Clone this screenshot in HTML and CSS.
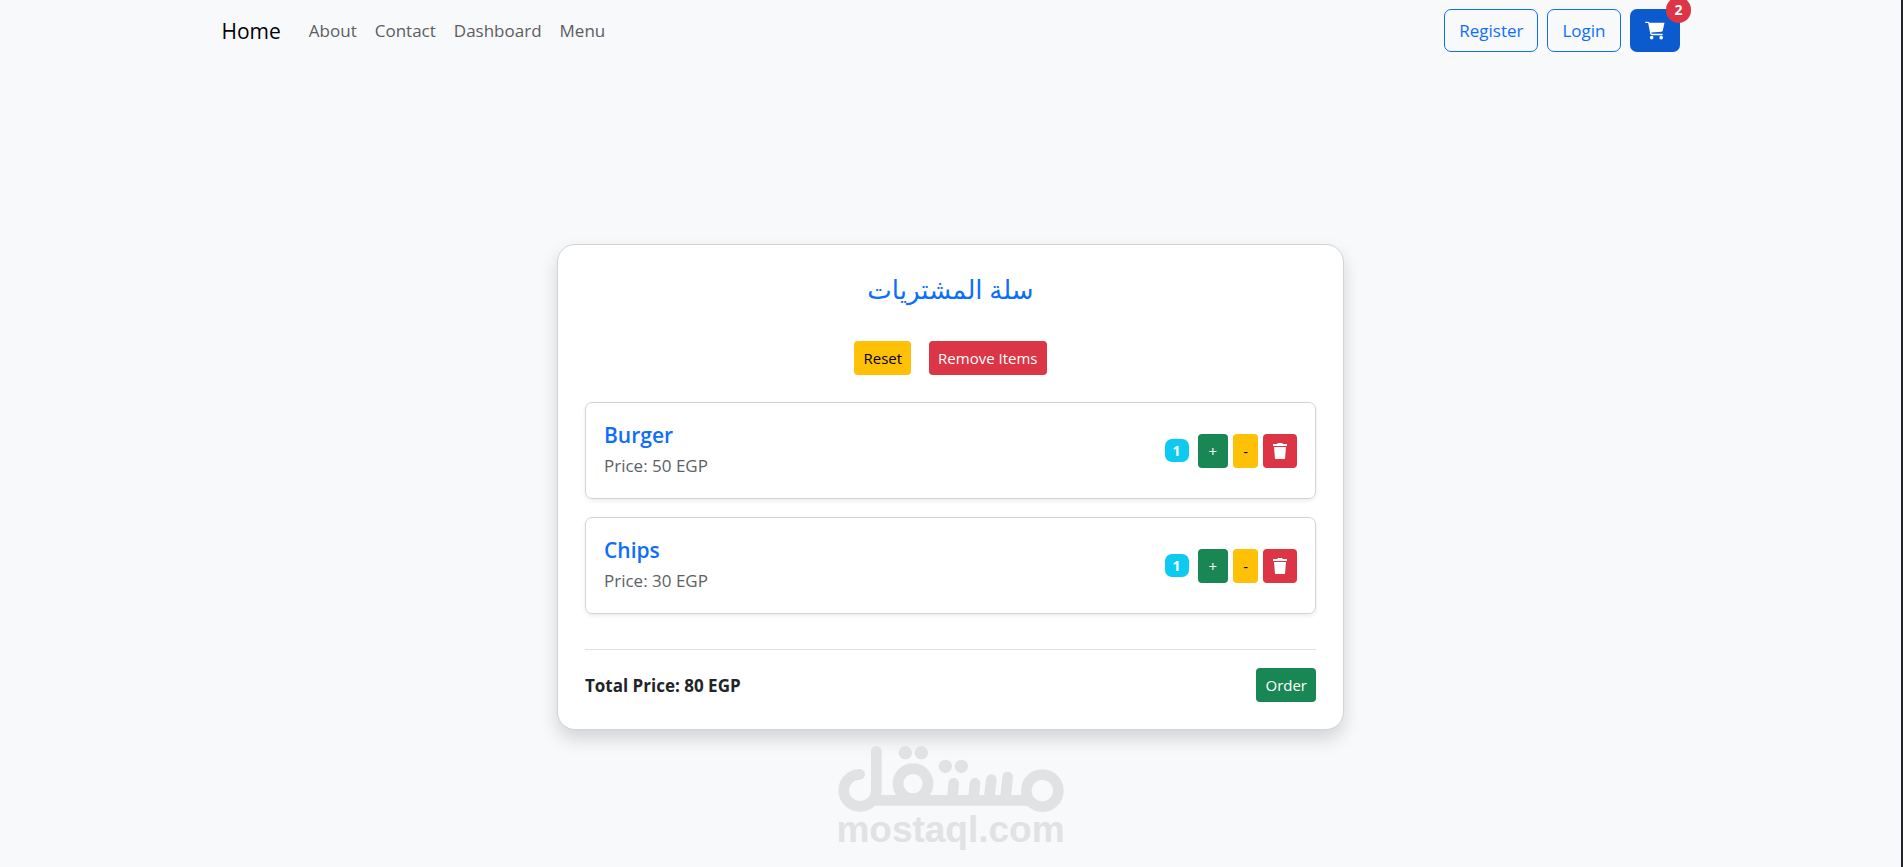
FILE: index.html
```html
<!DOCTYPE html>
<html lang="en">
<head>
    <meta charset="UTF-8">
    <meta name="viewport" content="width=device-width, initial-scale=1.0">
    <title>Cart</title>
    <link rel="stylesheet" href="styles.css">
</head>
<body>
    <!-- shared icons -->
    <svg class="icon-defs" aria-hidden="true">
        <symbol id="icon-trash" viewBox="0 0 14 16">
            <path d="M4 1L5 0h4l1 1h4v2H0V1z"/>
            <path d="M1 4h12l-1 12H2z"/>
        </symbol>
    </svg>

    <nav class="navbar">
        <div class="nav-inner">
            <a class="brand" href="#">Home</a>
            <div class="nav-links">
                <a href="#">About</a>
                <a href="#">Contact</a>
                <a href="#">Dashboard</a>
                <a href="#">Menu</a>
            </div>
            <div class="nav-actions">
                <a class="btn btn-outline" href="#">Register</a>
                <a class="btn btn-outline" href="#">Login</a>
                <button class="btn btn-cart" type="button" aria-label="Cart">
                    <svg class="cart-icon" viewBox="0 0 21 19" aria-hidden="true">
                        <path d="M4 1.300h16.500l-1.800 8.200q-.3 1.300-1.600 1.400L6.300 11.500z"/>
                        <path class="cart-line" d="M.7.900h2.500q.7 0 .9.800L6.200 12.700q.2 1 1.200 1H18"/>
                        <circle cx="7" cy="17" r="1.900"/>
                        <circle cx="17" cy="17" r="1.900"/>
                    </svg>
                    <span class="cart-count">2</span>
                </button>
            </div>
        </div>
    </nav>

    <main class="page">
        <section class="cart">
            <h3 class="cart-title" lang="ar" dir="rtl">سلة المشتريات</h3>

            <div class="cart-tools">
                <button class="btn btn-sm btn-warning" type="button">Reset</button>
                <button class="btn btn-sm btn-danger" type="button">Remove Items</button>
            </div>

            <div class="cart-items">
                <div class="item">
                    <div class="item-info">
                        <h5>Burger</h5>
                        <p>Price: 50 EGP</p>
                    </div>
                    <div class="item-actions">
                        <span class="qty">1</span>
                        <button class="btn btn-sm btn-success" type="button">+</button>
                        <button class="btn btn-sm btn-warning" type="button">-</button>
                        <button class="btn btn-sm btn-danger" type="button" aria-label="Delete">
                            <svg class="trash-icon" aria-hidden="true"><use href="#icon-trash"/></svg>
                        </button>
                    </div>
                </div>
                <div class="item">
                    <div class="item-info">
                        <h5>Chips</h5>
                        <p>Price: 30 EGP</p>
                    </div>
                    <div class="item-actions">
                        <span class="qty">1</span>
                        <button class="btn btn-sm btn-success" type="button">+</button>
                        <button class="btn btn-sm btn-warning" type="button">-</button>
                        <button class="btn btn-sm btn-danger" type="button" aria-label="Delete">
                            <svg class="trash-icon" aria-hidden="true"><use href="#icon-trash"/></svg>
                        </button>
                    </div>
                </div>
            </div>

            <div class="cart-footer">
                <strong>Total Price: 80 EGP</strong>
                <button class="btn btn-sm btn-success" type="button">Order</button>
            </div>
        </section>

        <div class="watermark">
            <svg class="watermark-logo" viewBox="54 34 678 198" aria-hidden="true">
                <g class="strokes">
                    <path d="M169 50V168A49 48 0 1 1 119 119"/>
                    <path d="M165 197H626"/>
                    <circle cx="279" cy="147" r="45"/>
                    <circle cx="667" cy="168" r="48"/>
                    <path d="M401 146L397 195M465 146L460 195M514 135L507 195M563 127L556 195"/>
                </g>
                <circle cx="256" cy="54" r="20"/>
                <circle cx="304" cy="54" r="20"/>
                <circle cx="376" cy="95" r="20"/>
                <circle cx="424" cy="95" r="20"/>
            </svg>
            <span>mostaql.com</span>
        </div>
    </main>
</body>
</html>
```
FILE: styles.css
```css
* {
    box-sizing: border-box;
}

body {
    margin: 0;
    min-height: 100vh;
    background: #f8f9fb;
    border-right: 2px solid #212529;
    color: #212529;
    font-family: "Open Sans", "DejaVu Sans", sans-serif;
    font-size: 17px;
    line-height: 25px;
}

a {
    text-decoration: none;
}

.icon-defs {
    position: absolute;
    width: 0;
    height: 0;
}

/* navbar */
.navbar {
    padding: 9px 16px;
}

.nav-inner {
    display: flex;
    align-items: center;
    max-width: 1458px;
    margin: 0 auto;
}

.brand {
    margin-right: 28px;
    color: #000;
    font-size: 21px;
    line-height: 26px;
}

.nav-links {
    display: flex;
    gap: 18px;
}

.nav-links a {
    color: #5c5d5e;
}

.nav-actions {
    display: flex;
    gap: 9px;
    margin-left: auto;
}

/* buttons */
.btn {
    display: inline-flex;
    align-items: center;
    justify-content: center;
    padding: 8px 14px;
    border: 1px solid transparent;
    border-radius: 7px;
    font-family: inherit;
    font-size: 17px;
    line-height: 25px;
    cursor: pointer;
}

.btn-outline {
    border-color: #0d6efd;
    color: #0d6efd;
}

.btn-cart {
    position: relative;
    background: #0b5ace;
    color: #fff;
}

.cart-icon {
    width: 20px;
    height: 19px;
    fill: currentColor;
}

.cart-line {
    fill: none;
    stroke: currentColor;
    stroke-width: 1.4;
    stroke-linecap: round;
}

.cart-count {
    position: absolute;
    top: 0;
    right: 0;
    transform: translate(50%, -50%);
    padding: 6px 8px;
    border-radius: 99px;
    background: #dc3545;
    font-size: 14px;
    font-weight: 700;
    line-height: 14px;
}

.btn-sm {
    padding: 4px 8px;
    border-radius: 4px;
    font-size: 15px;
    line-height: 24px;
}

.btn-warning {
    background: #ffc107;
    color: #000;
}

.btn-danger {
    background: #dc3545;
    color: #fff;
}

.btn-success {
    background: #198754;
    color: #fff;
}

/* cart card */
.page {
    display: flex;
    flex-direction: column;
    align-items: center;
    padding: 183px 16px 0;
}

.cart {
    width: 100%;
    max-width: 787px;
    padding: 27px;
    background: #fff;
    border: 1px solid #d2d3d4;
    border-radius: 18px;
    box-shadow: 0 9px 18px rgba(0, 0, 0, 0.15);
}

.cart-title {
    margin: 0 0 34px;
    color: #0d6efd;
    font-size: 26px;
    font-weight: 500;
    line-height: 35px;
    text-align: center;
}

.cart-tools {
    display: flex;
    justify-content: center;
    gap: 18px;
    margin-bottom: 27px;
}

.cart-items {
    display: flex;
    flex-direction: column;
    gap: 18px;
}

.item {
    display: flex;
    align-items: center;
    justify-content: space-between;
    padding: 18px;
    border: 1px solid #d2d3d4;
    border-radius: 7px;
    box-shadow: 0 2px 4px rgba(0, 0, 0, 0.075);
}

.item h5 {
    margin: 0 0 4px;
    color: #0d6efd;
    font-size: 21px;
    font-weight: 600;
    line-height: 28px;
}

.item p {
    margin: 0 0 2px;
    color: #5c6166;
}

.item-actions {
    display: flex;
    align-items: center;
    gap: 5px;
}

.item-actions .btn {
    min-height: 34px;
    padding: 4px 9px;
}

.item-actions .btn-success {
    padding: 4px 10px;
}

.qty {
    margin-right: 4px;
    padding: 5px 8px;
    border-radius: 7px;
    background: #0dcaf0;
    color: #fff;
    font-size: 14px;
    font-weight: 700;
    line-height: 13px;
}

.trash-icon {
    width: 14px;
    height: 16px;
    fill: currentColor;
}

.cart-footer {
    display: flex;
    align-items: center;
    justify-content: space-between;
    margin-top: 35px;
    padding-top: 18px;
    border-top: 1px solid #dee2e6;
}

/* watermark under the card */
.watermark {
    position: relative;
    display: flex;
    flex-direction: column;
    align-items: center;
    padding-top: 16px;
    color: #e1e2e4;
    font-family: "Liberation Sans", Arial, sans-serif;
    font-size: 37px;
    font-weight: 700;
    line-height: 36px;
}

.watermark-logo {
    width: 226px;
    height: 66px;
    fill: currentColor;
}

.watermark-logo .strokes {
    fill: none;
    stroke: currentColor;
    stroke-width: 32;
    stroke-linecap: round;
}
```
